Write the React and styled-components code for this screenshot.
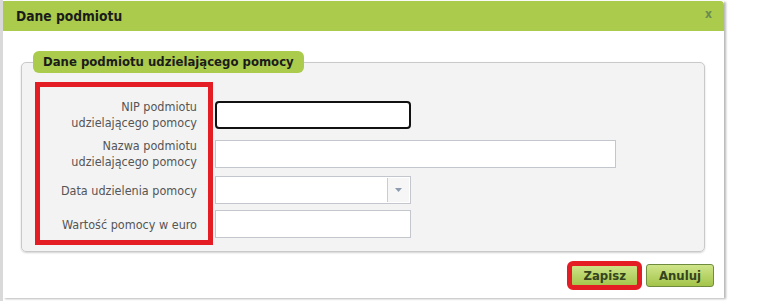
import React from 'react'
import styled, { createGlobalStyle } from 'styled-components'

/**
 * Style
 */
const GlobalStyle = createGlobalStyle`
  html, body {
    margin: 0;
    padding: 0;
    background: #ffffff;
  }
  body {
    font-family: "DejaVu Sans Condensed", "DejaVu Sans", Tahoma, sans-serif;
    font-stretch: condensed;
  }
`

const Page = styled.div`
  width: 764px;
  height: 301px;
  padding: 1px 0 0 3px;
  box-sizing: border-box;
  background: linear-gradient(to right, #d9d9d9 0, #d9d9d9 3px, #ffffff 3px);
`

const Dialog = styled.div`
  width: 721px;
  height: 297px;
  background: #ffffff;
  box-shadow: 2px 1px 2px rgba(0, 0, 0, 0.28);
  display: flex;
  flex-direction: column;
`

const TitleBar = styled.div`
  height: 29px;
  background: #aacb4b;
  display: flex;
  align-items: center;
  justify-content: space-between;
  padding: 0 12px 1px 13px;
  border-radius: 0 4px 0 0;
`

const Title = styled.span`
  font-size: 13.7px;
  font-weight: bold;
  color: #1b1b1b;
`

const Close = styled.span`
  font-size: 12px;
  font-weight: bold;
  color: #6d8a52;
  margin-top: -4px;
`

const Body = styled.div`
  padding: 20px 19px 0 18px;
`

const Fieldset = styled.fieldset`
  margin: 0;
  padding: 25px 10px 13px 14px;
  background: #f3f3f3;
  border: 1px solid #c9c9c9;
  border-radius: 5px;
  box-shadow: 0 1px 2px rgba(0, 0, 0, 0.18);
`

const Legend = styled.legend`
  margin-left: -3px;
  padding: 0 10px;
  height: 22px;
  line-height: 22px;
  background: #aacb4b;
  border-radius: 6px;
  font-size: 13px;
  font-weight: bold;
  color: #1b1b1b;
`

const Form = styled.div`
  position: relative;
  display: grid;
  grid-template-columns: 161px 1fr;
  column-gap: 18px;
  row-gap: 6px;
  align-items: center;
`

const Label = styled.label`
  text-align: right;
  font-size: 12.5px;
  line-height: 16px;
  color: #555555;
  padding-top: 1px;
`

const Field = styled.input`
  box-sizing: border-box;
  width: ${(p) => p.$width}px;
  height: 28px;
  margin: 0;
  padding: 0 6px;
  background: #ffffff;
  border: ${(p) => (p.$focused ? '2px solid #111111' : '1px solid #c3c6cc')};
  border-radius: ${(p) => (p.$focused ? '4px' : '0')};
  outline: none;
  font-family: inherit;
`

const Select = styled.div`
  box-sizing: border-box;
  width: 196px;
  height: 28px;
  display: flex;
  background: #ffffff;
  border: 1px solid #c3c6cc;
`

const SelectValue = styled.div`
  flex: 1;
`

const SelectButton = styled.div`
  width: 21px;
  margin: 1px 1px 1px 0;
  border-left: 1px solid #c9ccd1;
  background: #f6f6f6;
  display: flex;
  align-items: center;
  justify-content: center;
`

const Highlight = styled.div`
  position: absolute;
  left: -1px;
  top: -16px;
  width: 178px;
  height: 163px;
  box-sizing: border-box;
  border: 5px solid #e41d25;
  pointer-events: none;
`

const Footer = styled.div`
  display: flex;
  justify-content: flex-end;
  gap: 7px;
  padding: 12px 10px 0 0;
`

const Button = styled.button`
  height: 23px;
  padding: 0 ${(p) => p.$pad}px;
  background: linear-gradient(#cfe58a, #a3c44a);
  border: 1px solid #6f8b3e;
  border-radius: 3px;
  font-family: inherit;
  font-size: 13px;
  font-weight: bold;
  color: #34441e;
  outline: ${(p) => (p.$marked ? '5px solid #e41d25' : 'none')};
  outline-offset: -2px;
`

/**
 * Component
 */
const App = () => (
  <>
    <GlobalStyle />
    <Page>
      <Dialog>
        <TitleBar>
          <Title>Dane podmiotu</Title>
          <Close>x</Close>
        </TitleBar>
        <Body>
          <Fieldset>
            <Legend>Dane podmiotu udzielającego pomocy</Legend>
            <Form>
              <Highlight />
              <Label>
                NIP podmiotu
                <br />
                udzielającego pomocy
              </Label>
              <Field $width={196} $focused />
              <Label>
                Nazwa podmiotu
                <br />
                udzielającego pomocy
              </Label>
              <Field $width={401} />
              <Label>Data udzielenia pomocy</Label>
              <Select>
                <SelectValue />
                <SelectButton>
                  <svg width="7" height="4" viewBox="0 0 7 4">
                    <path d="M0 0h7L3.5 4z" fill="#8d9bb0" />
                  </svg>
                </SelectButton>
              </Select>
              <Label>Wartość pomocy w euro</Label>
              <Field $width={196} />
            </Form>
          </Fieldset>
        </Body>
        <Footer>
          <Button $pad={12} $marked>
            Zapisz
          </Button>
          <Button $pad={12}>Anuluj</Button>
        </Footer>
      </Dialog>
    </Page>
  </>
)

export default App
